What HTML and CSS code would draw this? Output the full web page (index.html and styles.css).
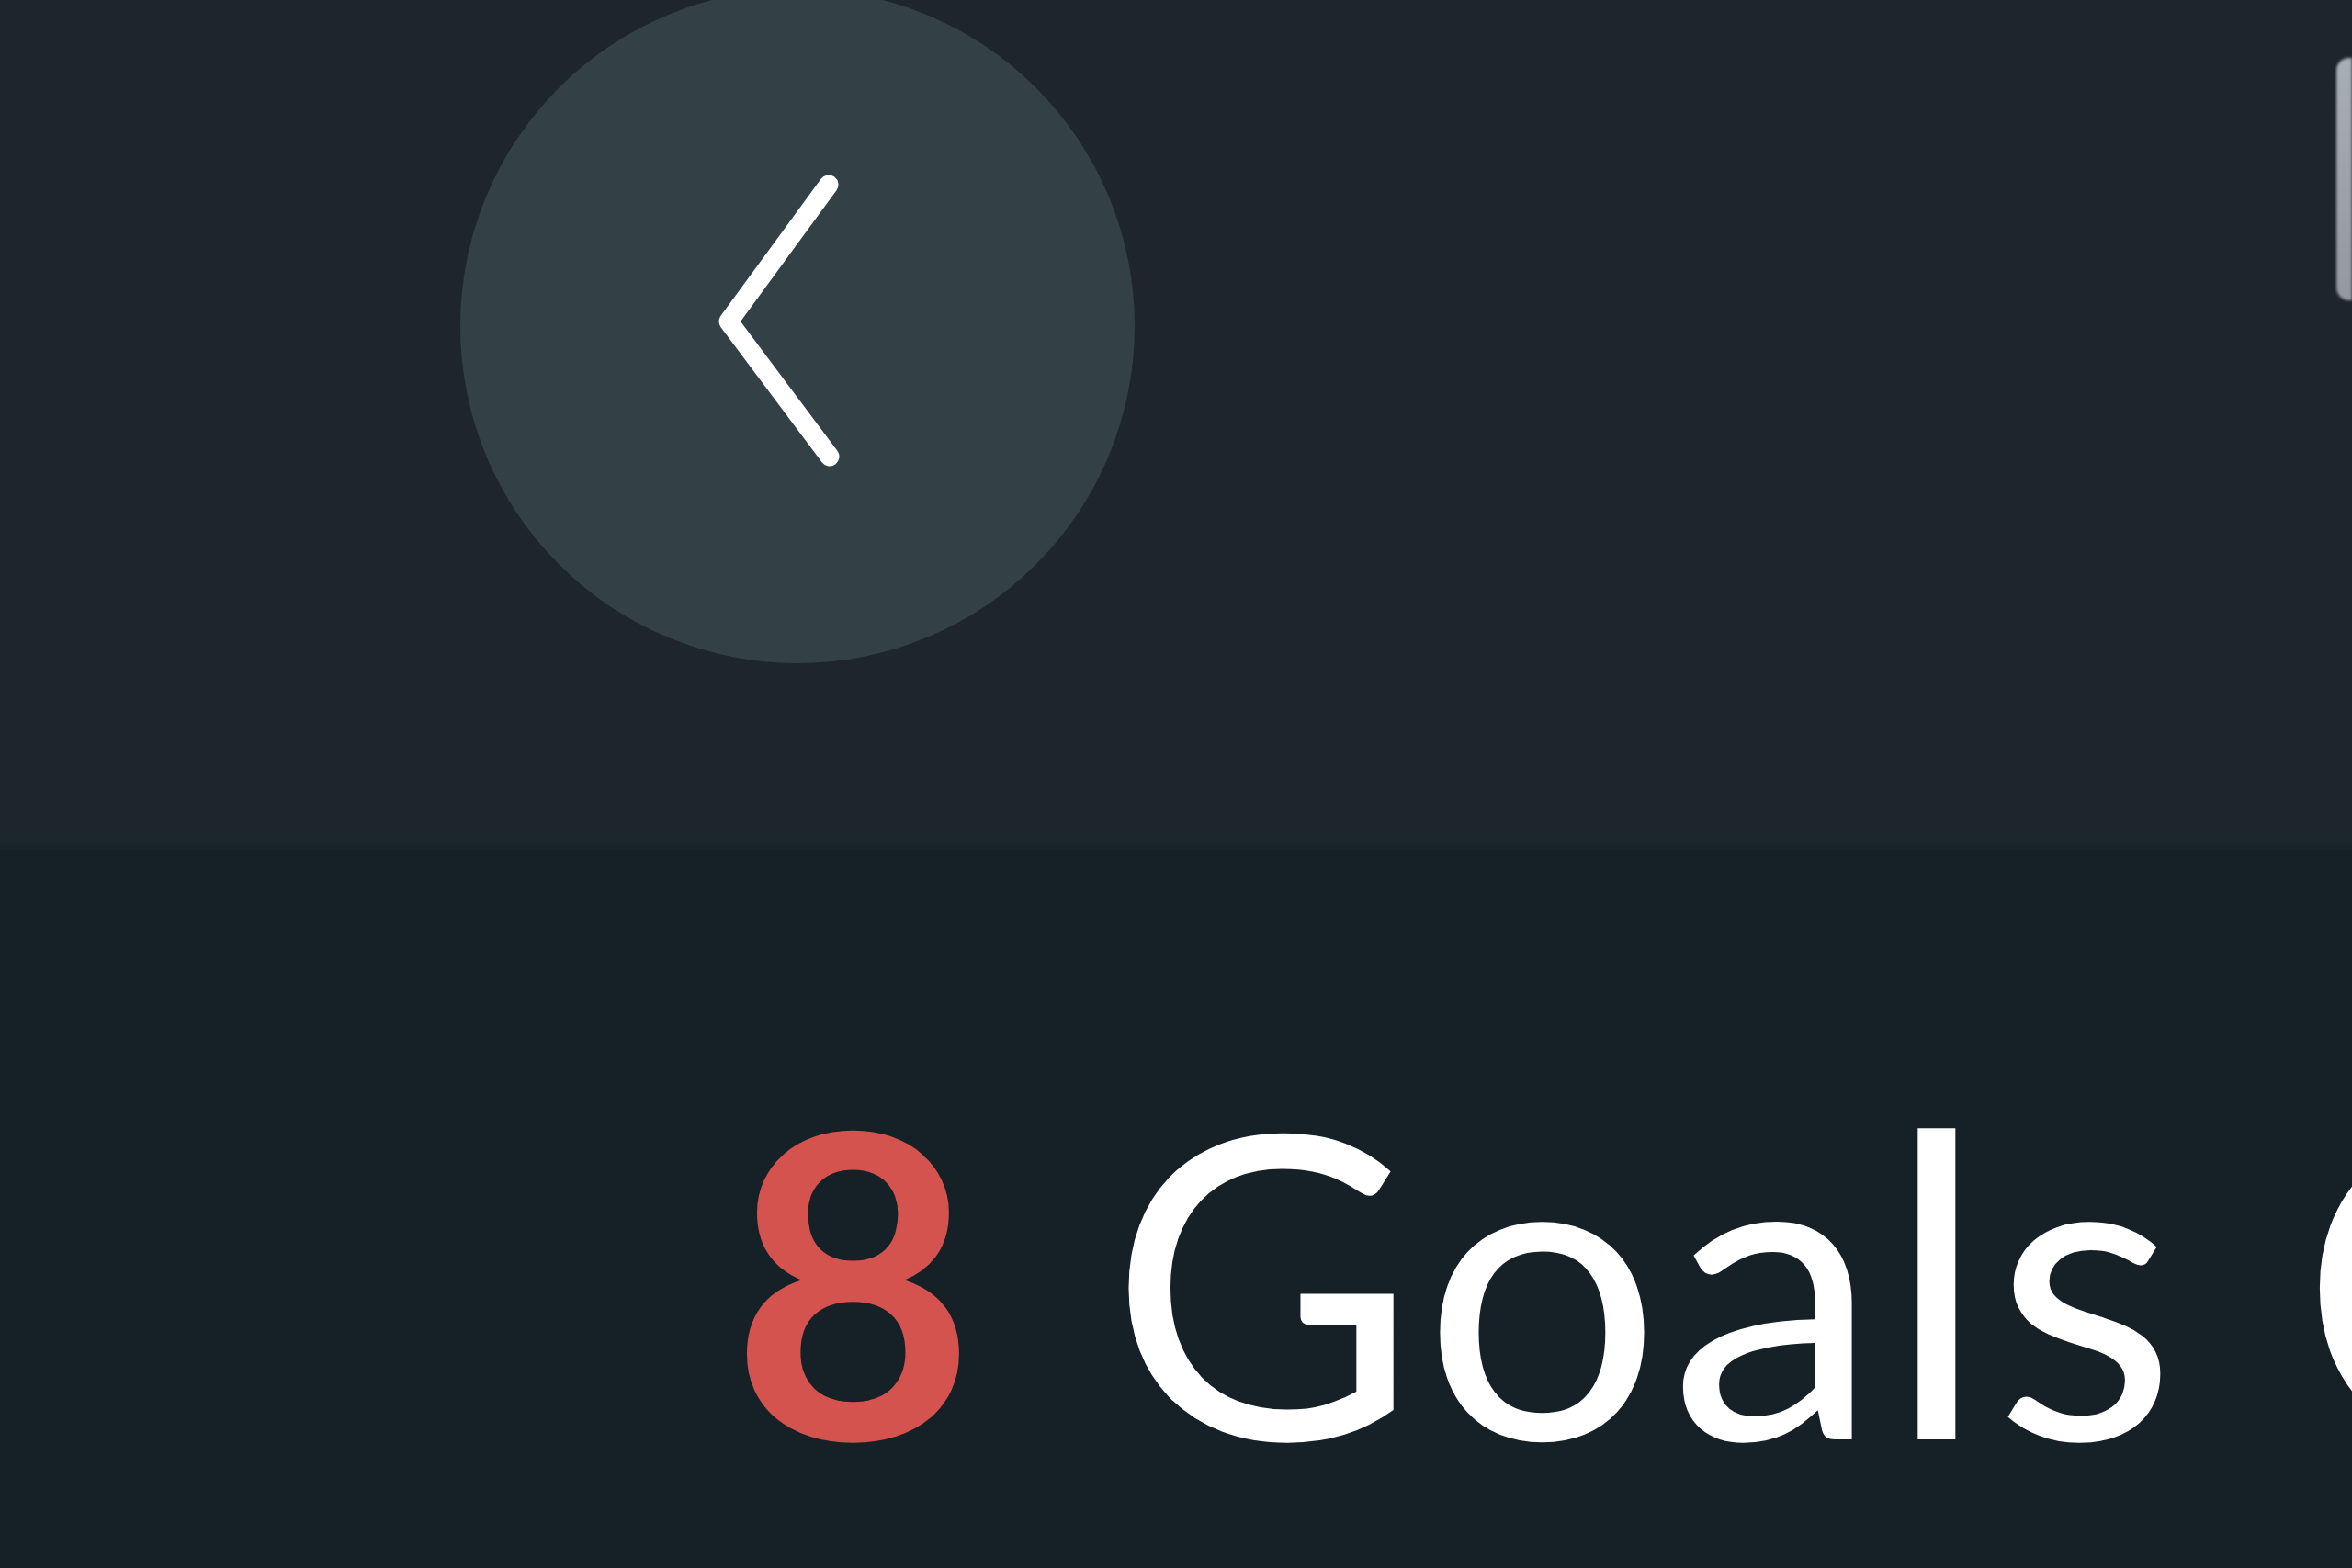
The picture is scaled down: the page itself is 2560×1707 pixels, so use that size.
FILE: index.html
```html
<!DOCTYPE html>
<html lang="en">
<head>
<meta charset="utf-8">
<title>Goals</title>
<link rel="stylesheet" href="styles.css">
</head>
<body>
<div class="page">
  <header class="topbar">
    <button class="back-btn" aria-label="Back">
      <svg class="back-icon" viewBox="0 0 734 734" width="734" height="734">
        <polyline points="401,213 292,362 402,509" fill="none" stroke="#ffffff" stroke-width="21" stroke-linecap="round" stroke-linejoin="round"/>
      </svg>
    </button>
    <div class="side-panel"></div>
  </header>
  <main class="content">
    <h1 class="title"><span class="count">8</span>Goals Completed</h1>
  </main>
</div>
</body>
</html>
```
FILE: styles.css
```css
html, body {
  margin: 0;
  padding: 0;
  width: 2560px;
  height: 1707px;
  overflow: hidden;
  background: #152127;
}

.page {
  display: flex;
  flex-direction: column;
  width: 2560px;
  height: 1707px;
  overflow: hidden;
}

.topbar {
  display: flex;
  align-items: flex-start;
  height: 925px;
  padding-left: 501px;
  box-sizing: border-box;
  background: linear-gradient(to bottom, #1e252d 0, #1e252d 895px, #1c262c 915px, #18232a 925px);
  flex-shrink: 0;
}

.back-btn {
  width: 734px;
  height: 734px;
  margin-top: -12px;
  padding: 0;
  border: none;
  border-radius: 50%;
  background: #334046;
  flex-shrink: 0;
  display: block;
}

.back-icon {
  display: block;
}

.side-panel {
  margin-left: auto;
  margin-top: 63px;
  width: 17px;
  height: 264px;
  border-radius: 14px 0 0 14px;
  background: linear-gradient(to bottom, #a8aeb5, #9ca1a7 60%, #92989e);
  filter: blur(1.5px);
}

.content {
  flex: 1;
  background: #152127;
  padding-left: 795px;
  padding-top: 234px;
}

.title {
  margin: 0;
  font-family: Lato, "Open Sans", sans-serif;
  font-weight: 400;
  font-size: 460px;
  line-height: 460px;
  letter-spacing: 8px;
  color: #ffffff;
  white-space: nowrap;
}

.count {
  color: #d5534f;
  font-weight: 700;
  letter-spacing: 0;
  margin-right: 145px;
}
```
